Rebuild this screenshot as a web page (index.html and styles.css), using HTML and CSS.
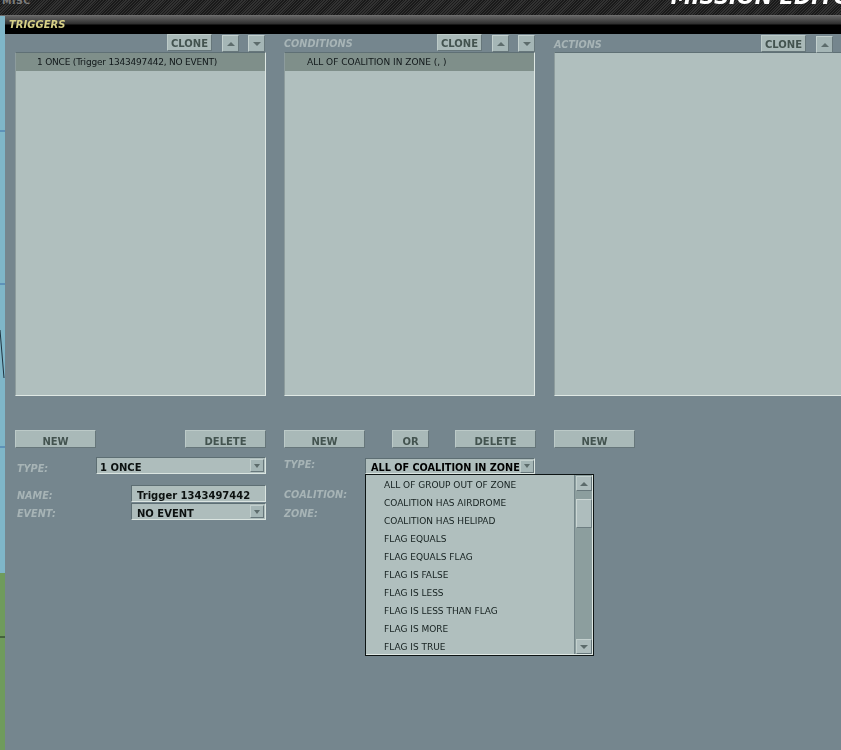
FILE: index.html
```html
<!DOCTYPE html>
<html lang="en">
<head>
<meta charset="utf-8">
<title>Mission Editor - Triggers</title>
<link rel="stylesheet" href="styles.css">
</head>
<body>
<div class="screen">
  <svg class="map" width="5" height="750" viewBox="0 0 5 750" aria-hidden="true">
    <rect width="5" height="573" fill="#7fb6c8"/>
    <rect y="573" width="5" height="177" fill="#6f9b5c"/>
    <path d="M0 131H5M0 284H5M0 447H5" stroke="#3f6fa8" stroke-width="1"/>
    <path d="M0 330L4 378" stroke="#1f3440" stroke-width="1" fill="none"/>
    <path d="M0 637H5" stroke="#1c2a1c" stroke-width="1"/>
  </svg>
  <header class="topbar">
    <span class="misc">MISC</span>
    <span class="title">MISSION EDITOR</span>
  </header>
  <main class="window">
    <div class="caption"><span class="caption-text">TRIGGERS</span></div>
    <div class="columns">

      <section class="col first-col">
        <div class="head">
          <button class="btn clone">CLONE</button>
          <button class="arrow"><i class="tri up"></i></button>
          <button class="arrow"><i class="tri down"></i></button>
        </div>
        <div class="list"><div class="row selected trig">1 ONCE (Trigger 1343497442, NO EVENT)</div></div>
        <div class="actions">
          <button class="btn wide">NEW</button>
          <button class="btn wide">DELETE</button>
        </div>
        <div class="form">
          <div class="field type-field">
            <span class="label">TYPE:</span>
            <div class="select w170 tight"><span class="val">1 ONCE</span><span class="arrow small"><i class="tri down"></i></span></div>
          </div>
          <div class="field name-field">
            <span class="label">NAME:</span>
            <div class="select w135"><span class="val">Trigger 1343497442</span></div>
          </div>
          <div class="field">
            <span class="label">EVENT:</span>
            <div class="select w135"><span class="val">NO EVENT</span><span class="arrow small"><i class="tri down"></i></span></div>
          </div>
        </div>
      </section>

      <section class="col">
        <div class="head">
          <span class="label head-label">CONDITIONS</span>
          <button class="btn clone">CLONE</button>
          <button class="arrow"><i class="tri up"></i></button>
          <button class="arrow"><i class="tri down"></i></button>
        </div>
        <div class="list"><div class="row selected cond">ALL OF COALITION IN ZONE (, )</div></div>
        <div class="actions">
          <button class="btn wide">NEW</button>
          <button class="btn or">OR</button>
          <button class="btn wide">DELETE</button>
        </div>
        <div class="form cond-form">
          <div class="field cond-type">
            <span class="label">TYPE:</span>
            <div class="select w170 short"><span class="val strong">ALL OF COALITION IN ZONE</span><span class="arrow small"><i class="tri down"></i></span></div>
          </div>
          <span class="label stacked first">COALITION:</span>
          <span class="label stacked">ZONE:</span>
          <div class="dropdown">
            <ul class="options">
              <li>ALL OF GROUP OUT OF ZONE</li>
              <li>COALITION HAS AIRDROME</li>
              <li>COALITION HAS HELIPAD</li>
              <li>FLAG EQUALS</li>
              <li>FLAG EQUALS FLAG</li>
              <li>FLAG IS FALSE</li>
              <li>FLAG IS LESS</li>
              <li>FLAG IS LESS THAN FLAG</li>
              <li>FLAG IS MORE</li>
              <li>FLAG IS TRUE</li>
            </ul>
            <div class="scrollbar">
              <span class="arrow bar-btn"><i class="tri up"></i></span>
              <span class="thumb"></span>
              <span class="arrow bar-btn end"><i class="tri down"></i></span>
            </div>
          </div>
        </div>
      </section>

      <section class="col last">
        <div class="head">
          <span class="label head-label">ACTIONS</span>
          <button class="btn clone">CLONE</button>
          <button class="arrow"><i class="tri up"></i></button>
          <button class="arrow"><i class="tri down"></i></button>
        </div>
        <div class="list"></div>
        <div class="actions">
          <button class="btn wide">NEW</button>
        </div>
      </section>

    </div>
  </main>
</div>
</body>
</html>
```

FILE: styles.css
```css
* { box-sizing: border-box; }
html, body { margin: 0; padding: 0; }
body {
  width: 841px;
  height: 750px;
  overflow: hidden;
  font-family: "DejaVu Sans", sans-serif;
  background: #75868e;
}
button { font-family: inherit; padding: 0; margin: 0; cursor: default; }
.screen {
  position: relative;
  width: 841px;
  height: 750px;
  overflow: hidden;
  display: flex;
  flex-direction: column;
}
.map { position: absolute; left: 0; top: 0; }

/* top bar */
.topbar {
  position: relative;
  flex: 0 0 16px;
  height: 16px;
  overflow: hidden;
  display: flex;
  border-bottom: 1px solid #6c6c6c;
  background: repeating-linear-gradient(135deg, #1a1a1a 0 1px, #323232 1px 2px);
}
.misc {
  font: bold 9.5px/1 "DejaVu Sans", sans-serif;
  color: #7d7d7d;
  margin: -4px 0 0 2px;
  height: 10px;
  letter-spacing: .5px;
}
.title {
  flex: none;
  font: italic bold 21px/1 "DejaVu Sans", sans-serif;
  color: #fff;
  margin: -13px 0 0 640px;
  height: 21px;
  white-space: nowrap;
  filter: blur(.3px);
}

/* window */
.window {
  position: relative;
  flex: 1;
  margin-left: 5px;
  background: #75868e;
  min-height: 0;
}
.caption {
  height: 18px;
  background: linear-gradient(#646464 0, #515151 3px, #2e2e2e 8px, #000 9px);
}
.caption-text {
  display: block;
  font: italic bold 10px/18px "DejaVu Sans", sans-serif;
  color: #d6cf86;
  padding-left: 4px;
  filter: blur(.25px);
}
.columns {
  display: grid;
  grid-template-columns: 251px 251px 306px;
  column-gap: 18px;
  padding-left: 10px;
}
.col { position: relative; min-width: 0; }
.last { margin-left: 1px; }

/* column head */
.head {
  height: 18px;
  display: flex;
  align-items: flex-start;
  justify-content: flex-end;
  padding-top: 1px;
}
.first-col .head { padding-right: 1px; }
.last .head { padding-top: 2px; }
.head-label { margin-right: auto; margin-top: 2px; color: #a3b1b3; }

/* shared bits */
.btn {
  flex: none;
  font-weight: bold;
  font-size: 10px;
  line-height: 14px;
  color: #43534f;
  background: #a9b9b8;
  padding-top: 4px;
  border: 1px solid;
  border-color: #bccac8 #66767a #66767a #bccac8;
  filter: blur(.3px);
}
.clone { margin-top: -1px; margin-right: 10px; width: 45px; height: 17px; padding-top: 2px; }
.head .arrow + .arrow { margin-left: 9px; }
.arrow {
  flex: none;
  display: flex;
  align-items: center;
  justify-content: center;
  width: 17px;
  height: 17px;
  background: #a5b6b6;
  border: 1px solid;
  border-color: #c3d0ce #67777b #67777b #c3d0ce;
}
.tri {
  display: block;
  flex: none;
  width: 0;
  height: 0;
  border-left: 4px solid transparent;
  border-right: 4px solid transparent;
}
.tri.up { border-bottom: 4px solid #5d6c6c; }
.tri.down { border-top: 4px solid #5d6c6c; }
.label {
  font: italic bold 9.7px/14px "DejaVu Sans", sans-serif;
  color: #a7b4b6;
  white-space: nowrap;
  filter: blur(.25px);
}

/* lists */
.list {
  height: 344px;
  background: #b0bfbe;
  border: 1px solid;
  border-color: #5f7075 #dfe8e4 #dfe8e4 #8d9c9d;
  overflow: hidden;
}
.row {
  height: 18px;
  font-size: 9px;
  line-height: 18px;
  color: #11181a;
  white-space: nowrap;
  filter: blur(.25px);
}
.row.selected { background: #7f8f8a; }
.row.trig { padding-left: 21px; letter-spacing: -.2px; }
.row.cond { padding-left: 22px; }

/* action buttons */
.actions {
  display: flex;
  justify-content: space-between;
  margin-top: 34px;
  height: 20px;
}
.wide { width: 81px; height: 18px; }
.or { width: 37px; height: 18px; margin-left: 27px; margin-right: 26px; }
.last .actions { justify-content: flex-start; }

/* forms */
.form {
  position: relative;
  padding-top: 7px;
  height: 290px;
}
.field {
  display: flex;
  justify-content: space-between;
  align-items: flex-start;
  padding-left: 2px;
  height: 18px;
}
.field > .label { margin-top: 4px; }
.type-field { height: 17px; margin-bottom: 11px; }
.type-field > .label { margin-top: 5px; }
.select {
  display: flex;
  align-items: center;
  justify-content: space-between;
  height: 17px;
  background: #aebdbc;
  border: 1px solid;
  border-color: #5d6e73 #dbe5e1 #dbe5e1 #5d6e73;
  padding-left: 5px;
  padding-right: 1px;
}
.tight { padding-left: 3px; }
.w170 { width: 170px; }
.w135 { width: 135px; }
.val {
  font-weight: bold;
  font-size: 10px;
  line-height: 15px;
  padding-top: 3px;
  color: #0c1110;
  white-space: nowrap;
  filter: blur(.2px);
}
.val.strong { font-size: 9.7px; color: #000; }
.arrow.small { width: 14px; height: 13px; }
.small .tri { border-left-width: 3.5px; border-right-width: 3.5px; }

.cond-form { padding-top: 8px; }
.cond-type { padding-left: 0; height: 30px; }
.cond-type > .label { margin-top: 0; }
.short { height: 16px; }
.stacked { display: block; }
.stacked.first { margin-bottom: 5px; }

/* dropdown popup */
.dropdown {
  position: absolute;
  left: 81px;
  top: 24px;
  width: 229px;
  height: 182px;
  display: flex;
  background: #b0bfbe;
  border: 1px solid #0d1414;
  box-shadow: inset -1px -1px 0 #dfe8e4;
}
.options {
  list-style: none;
  margin: 0;
  padding: 1px 0 0;
  flex: 1;
}
.options li {
  height: 18px;
  font-size: 9px;
  line-height: 18px;
  color: #15201f;
  padding-left: 18px;
  white-space: nowrap;
  filter: blur(.2px);
}
.scrollbar {
  flex: 0 0 18px;
  margin-bottom: 1px;
  margin-right: 1px;
  padding-top: 1px;
  display: flex;
  flex-direction: column;
  align-items: center;
  background: #8c9e9e;
  border-left: 1px solid #75868a;
}
.bar-btn { width: 16px; height: 15px; background: #aebdbd; }
.thumb {
  display: block;
  width: 16px;
  height: 29px;
  margin-top: 8px;
  background: #aebdbd;
  border: 1px solid;
  border-color: #cbd6d4 #6d7d81 #6d7d81 #cbd6d4;
}
.end { margin-top: auto; }
```
